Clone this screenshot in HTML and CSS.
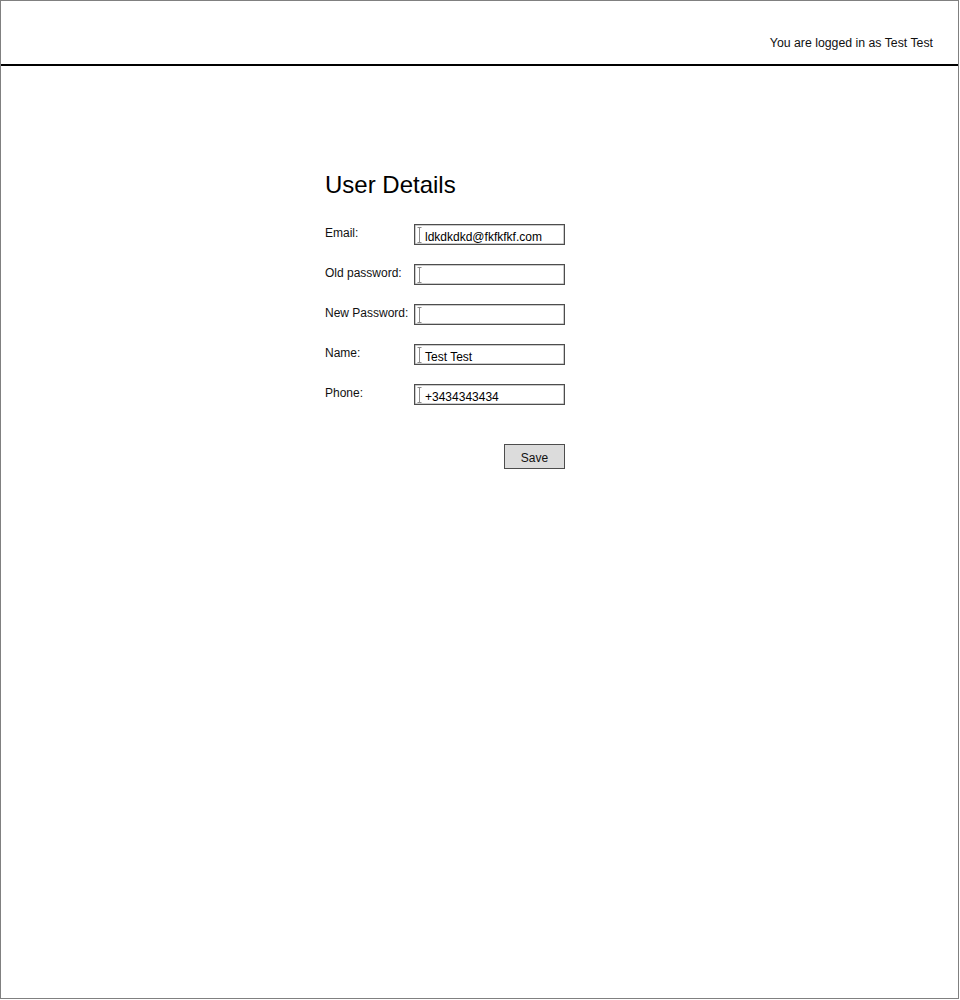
FILE: index.html
```html
<!DOCTYPE html>
<html>
<head>
<meta charset="utf-8">
<title>User Details</title>
<link rel="stylesheet" href="styles.css">
</head>
<body>
<div class="frame">
  <header class="topbar">
    <span class="login-info">You are logged in as Test Test</span>
  </header>
  <main class="content">
    <section class="details">
      <h1 class="title">User Details</h1>
      <div class="form">
        <div class="label">Email:</div>
        <div class="field">
          <svg class="caret" viewBox="0 0 5 16" width="5" height="16"><path d="M0.5 0.5H4.5M2.5 0.5V15.5M0.5 15.5H4.5" fill="none" stroke="#8c8c8c" stroke-width="1"/></svg>
          <span class="value">ldkdkdkd@fkfkfkf.com</span>
        </div>

        <div class="label">Old password:</div>
        <div class="field">
          <svg class="caret" viewBox="0 0 5 16" width="5" height="16"><path d="M0.5 0.5H4.5M2.5 0.5V15.5M0.5 15.5H4.5" fill="none" stroke="#8c8c8c" stroke-width="1"/></svg>
          <span class="value"></span>
        </div>

        <div class="label">New Password:</div>
        <div class="field">
          <svg class="caret" viewBox="0 0 5 16" width="5" height="16"><path d="M0.5 0.5H4.5M2.5 0.5V15.5M0.5 15.5H4.5" fill="none" stroke="#8c8c8c" stroke-width="1"/></svg>
          <span class="value"></span>
        </div>

        <div class="label">Name:</div>
        <div class="field">
          <svg class="caret" viewBox="0 0 5 16" width="5" height="16"><path d="M0.5 0.5H4.5M2.5 0.5V15.5M0.5 15.5H4.5" fill="none" stroke="#8c8c8c" stroke-width="1"/></svg>
          <span class="value">Test Test</span>
        </div>

        <div class="label">Phone:</div>
        <div class="field">
          <svg class="caret" viewBox="0 0 5 16" width="5" height="16"><path d="M0.5 0.5H4.5M2.5 0.5V15.5M0.5 15.5H4.5" fill="none" stroke="#8c8c8c" stroke-width="1"/></svg>
          <span class="value">+3434343434</span>
        </div>

        <div class="actions">
          <button class="save" type="button">Save</button>
        </div>
      </div>
    </section>
  </main>
</div>
</body>
</html>
```

FILE: styles.css
```css
html, body {
  margin: 0;
  padding: 0;
  background: #fff;
}

body {
  font-family: "Liberation Sans", Arial, sans-serif;
  font-size: 12px;
  color: #111;
}

.frame {
  box-sizing: border-box;
  width: 959px;
  height: 999px;
  border: 1px solid #808080;
}

.topbar {
  box-sizing: border-box;
  height: 65px;
  border-bottom: 2px solid #000;
  padding: 35px 25px 0 0;
  display: flex;
  justify-content: flex-end;
  align-items: flex-start;
}

.login-info {
  font-size: 12.3px;
  line-height: 14px;
}

.content {
  padding: 105px 0 0 324px;
}

.title {
  margin: 0;
  font-size: 24px;
  font-weight: normal;
  line-height: 28px;
  color: #000;
}

.form {
  margin-top: 25px;
  display: grid;
  grid-template-columns: 89px 151px;
  grid-auto-rows: 21px;
  row-gap: 19px;
}

.label {
  padding-top: 2px;
  line-height: 14px;
  white-space: nowrap;
}

.field {
  box-sizing: border-box;
  height: 21px;
  border: 1px solid #4d4d4d;
  box-shadow: inset 0 0 0 0.5px #9a9a9a;
  padding-left: 2px;
  display: flex;
  align-items: flex-start;
  overflow: hidden;
}

.caret {
  display: block;
  flex: none;
  margin-top: 2px;
}

.value {
  margin: 6px 0 0 3px;
  line-height: 13px;
  white-space: nowrap;
  color: #000;
}

.actions {
  grid-column: 1 / 3;
  display: flex;
  justify-content: flex-end;
  margin-top: 20px;
  height: 25px;
}

.save {
  box-sizing: border-box;
  width: 61px;
  height: 25px;
  margin: 0;
  padding: 2px 0 0;
  border: 1px solid #4d4d4d;
  border-radius: 0;
  background: #dcdcdc;
  font-family: "Liberation Sans", Arial, sans-serif;
  font-size: 12px;
  line-height: 14px;
  color: #111;
}
```
